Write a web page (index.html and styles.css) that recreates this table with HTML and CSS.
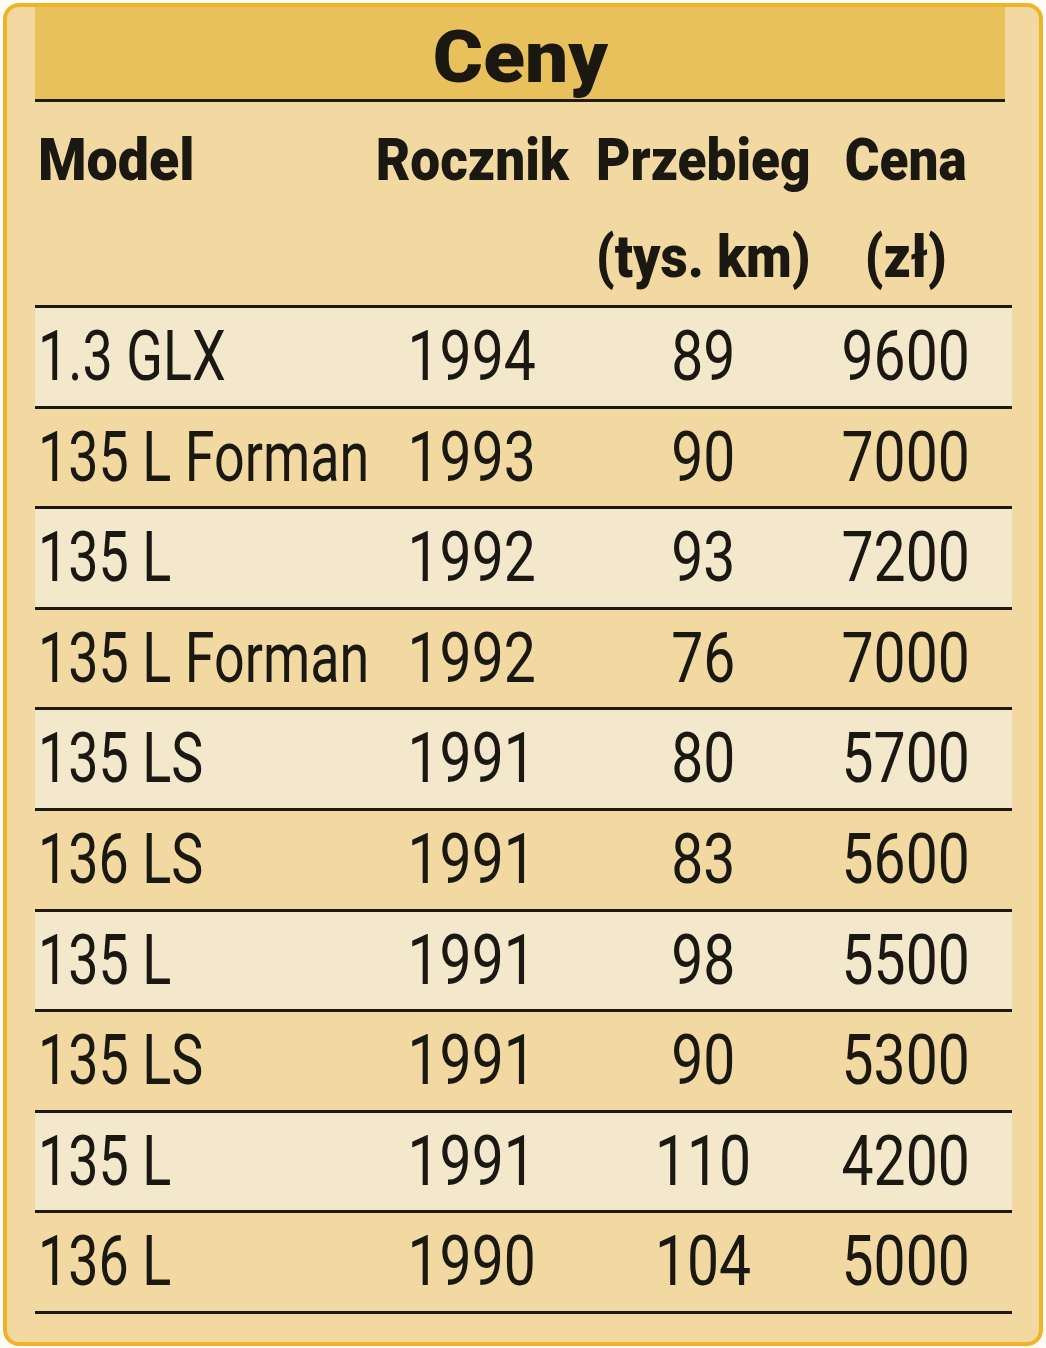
FILE: index.html
```html
<!DOCTYPE html>
<html lang="pl">
<head>
<meta charset="utf-8">
<title>Ceny</title>
<link rel="stylesheet" href="styles.css">
</head>
<body>
<div class="card">
  <div class="title"><span class="title-text">Ceny</span></div>
  <div class="grid head">
    <div class="cell left"><span class="hx">Model</span></div>
    <div class="cell"><span class="hx">Rocznik</span></div>
    <div class="cell"><span class="hx">Przebieg<br>(tys. km)</span></div>
    <div class="cell"><span class="hx">Cena<br>(zł)</span></div>
  </div>
  <div class="grid row light">
    <div class="cell left"><span class="dx">1.3 GLX</span></div>
    <div class="cell"><span class="dx">1994</span></div>
    <div class="cell"><span class="dx">89</span></div>
    <div class="cell"><span class="dx">9600</span></div>
  </div>
  <div class="grid row">
    <div class="cell left"><span class="dx">135 L Forman</span></div>
    <div class="cell"><span class="dx">1993</span></div>
    <div class="cell"><span class="dx">90</span></div>
    <div class="cell"><span class="dx">7000</span></div>
  </div>
  <div class="grid row light">
    <div class="cell left"><span class="dx">135 L</span></div>
    <div class="cell"><span class="dx">1992</span></div>
    <div class="cell"><span class="dx">93</span></div>
    <div class="cell"><span class="dx">7200</span></div>
  </div>
  <div class="grid row">
    <div class="cell left"><span class="dx">135 L Forman</span></div>
    <div class="cell"><span class="dx">1992</span></div>
    <div class="cell"><span class="dx">76</span></div>
    <div class="cell"><span class="dx">7000</span></div>
  </div>
  <div class="grid row light">
    <div class="cell left"><span class="dx">135 LS</span></div>
    <div class="cell"><span class="dx">1991</span></div>
    <div class="cell"><span class="dx">80</span></div>
    <div class="cell"><span class="dx">5700</span></div>
  </div>
  <div class="grid row">
    <div class="cell left"><span class="dx">136 LS</span></div>
    <div class="cell"><span class="dx">1991</span></div>
    <div class="cell"><span class="dx">83</span></div>
    <div class="cell"><span class="dx">5600</span></div>
  </div>
  <div class="grid row light">
    <div class="cell left"><span class="dx">135 L</span></div>
    <div class="cell"><span class="dx">1991</span></div>
    <div class="cell"><span class="dx">98</span></div>
    <div class="cell"><span class="dx">5500</span></div>
  </div>
  <div class="grid row">
    <div class="cell left"><span class="dx">135 LS</span></div>
    <div class="cell"><span class="dx">1991</span></div>
    <div class="cell"><span class="dx">90</span></div>
    <div class="cell"><span class="dx">5300</span></div>
  </div>
  <div class="grid row light">
    <div class="cell left"><span class="dx">135 L</span></div>
    <div class="cell"><span class="dx">1991</span></div>
    <div class="cell"><span class="dx">110</span></div>
    <div class="cell"><span class="dx">4200</span></div>
  </div>
  <div class="grid row">
    <div class="cell left"><span class="dx">136 L</span></div>
    <div class="cell"><span class="dx">1990</span></div>
    <div class="cell"><span class="dx">104</span></div>
    <div class="cell"><span class="dx">5000</span></div>
  </div>
</div>
</body>
</html>
```
FILE: styles.css
```css
html, body {
  margin: 0;
  padding: 0;
  background: #fefcf7;
}

body {
  font-family: Roboto, "DejaVu Sans", sans-serif;
  color: #1b1812;
}

.card {
  box-sizing: border-box;
  margin: 3px;
  width: 1040px;
  height: 1343px;
  border: 4px solid #f0b226;
  border-radius: 16px;
  background: #f1d9a1;
  padding: 0 27px 0 28px;
  overflow: hidden;
}

.title {
  width: 970px;
  height: 88px;
  padding-top: 4px;
  background: #e9c15c;
  border-bottom: 3px solid #221d14;
  text-align: center;
  line-height: 92px;
}

.title-text {
  display: inline-block;
  font-size: 73px;
  font-weight: 900;
  transform: scaleX(1.05);
}

.grid {
  display: grid;
  grid-template-columns: 343px 188px 274px 132px 40px;
  width: 977px;
  border-bottom: 3px solid #1e1a12;
}

.cell {
  display: flex;
  justify-content: center;
  white-space: nowrap;
}

.cell.left {
  justify-content: flex-start;
  padding-left: 3px;
}

.head {
  padding-top: 9px;
  height: 194px;
  line-height: 97px;
}

.hx {
  display: inline-block;
  text-align: center;
  font-size: 59px;
  font-weight: 900;
  transform: scaleX(0.9);
}

.left .hx {
  text-align: left;
  transform: scaleX(0.94);
}

.left .hx,
.left .dx {
  transform-origin: left center;
}

.row {
  height: 97.6px;
  line-height: 97.6px;
}

.row.light {
  background: #f4e8cc;
}

.dx {
  display: inline-block;
  font-size: 70px;
  font-weight: 400;
  transform: scaleX(0.815);
}

.left .dx {
  transform: scaleX(0.77);
}
```
